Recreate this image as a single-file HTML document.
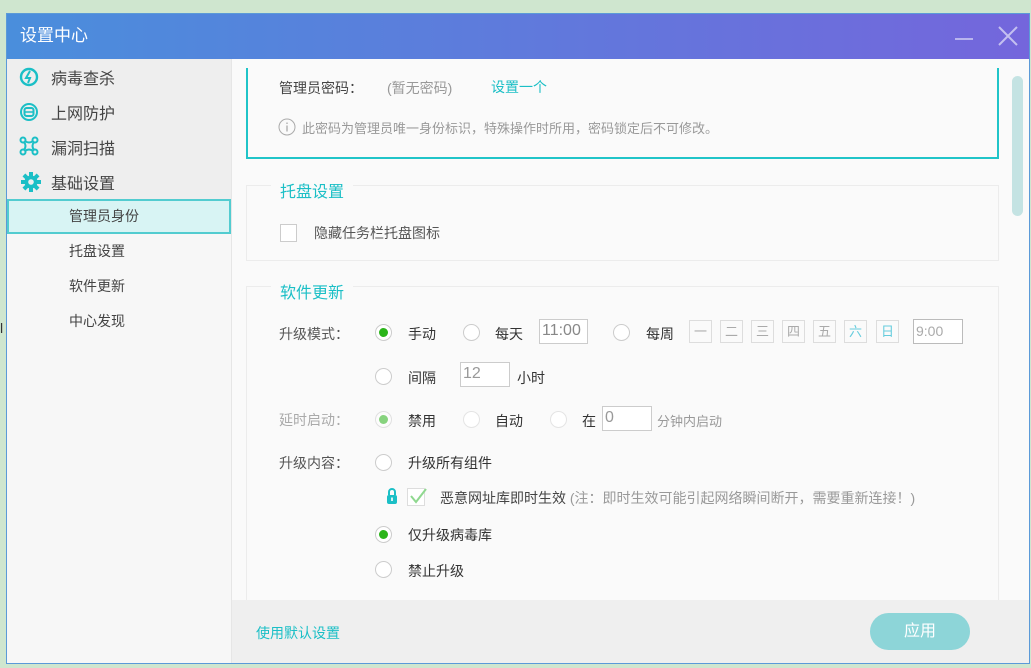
<!DOCTYPE html>
<html><head><meta charset="utf-8"><style>
*{margin:0;padding:0;box-sizing:border-box}
body{width:1031px;height:668px;overflow:hidden;background:#cfe6cf;font-family:"Liberation Sans","Noto Sans CJK SC",sans-serif;font-size:14px;color:#333;position:relative}
.abs{position:absolute}
.win{left:6px;top:13px;width:1024px;height:651px;background:#fafafa;border:1px solid #5b9ad8;overflow:hidden}
.title{left:0;top:0;width:1024px;height:45px;background:linear-gradient(90deg,#4a8edc,#7466dc);color:#fff;font-size:17px;line-height:44px;padding-left:13px}
.side{left:0;top:45px;width:224px;height:606px;background:#f7f7f7}
.side .top{height:140px;background:#eeeeee}
.mi{position:absolute;left:44px;font-size:16px;color:#444}
.si{position:absolute;left:62px;font-size:14px;color:#444}
.ico{position:absolute;left:12px}
.teal{color:#1bbfc6}
.radio{position:absolute;width:17px;height:17px;border-radius:50%;border:1px solid #ccc;background:#fff}
.radio.on::after{content:"";position:absolute;left:3px;top:3px;width:9px;height:9px;border-radius:50%;background:#2bb51a}
.box{position:absolute;border:1px solid #ccc;background:#fff;color:#999;font-size:16px;line-height:22px;padding-left:2px}
.day{position:absolute;top:306px;width:23px;height:23px;border:1px solid #ddd;color:#aaa;text-align:center;line-height:21px;font-size:13px}
.t{position:absolute;font-size:14px;white-space:nowrap}
.lbl{color:#555}
</style></head><body>
<div class="abs" style="left:0;top:320px;width:6px;height:20px;color:#333;font-size:14px">l</div>
<div class="abs win">
 <div class="abs title">设置中心
  <div class="abs" style="left:948px;top:24px;width:18px;height:2px;background:#b9b5ee"></div>
  <svg class="abs" style="left:990px;top:11px" width="22" height="22"><path d="M2 2L20 20M20 2L2 20" stroke="#c4c0f0" stroke-width="2"/></svg>
 </div>
 <div class="abs side">
  <div class="top"></div>
  <svg class="ico" style="top:8px" width="20" height="20"><circle cx="10" cy="10" r="8" fill="none" stroke="#1bbfc6" stroke-width="2.4"/><path d="M11 4L7 11h4l-2 5" fill="none" stroke="#1bbfc6" stroke-width="2"/></svg>
  <div class="mi" style="top:6px">病毒查杀</div>
  <svg class="ico" style="top:43px" width="20" height="20"><circle cx="10" cy="10" r="8" fill="none" stroke="#1bbfc6" stroke-width="2"/><rect x="5.5" y="6" width="9" height="8" rx="2" fill="none" stroke="#1bbfc6" stroke-width="2"/><path d="M6 10h8" stroke="#1bbfc6" stroke-width="1.5"/></svg>
  <div class="mi" style="top:41px">上网防护</div>
  <svg class="ico" style="top:77px" width="20" height="20"><g fill="none" stroke="#1bbfc6" stroke-width="2"><circle cx="4" cy="4" r="2.5"/><circle cx="16" cy="4" r="2.5"/><circle cx="4" cy="16" r="2.5"/><circle cx="16" cy="16" r="2.5"/><path d="M6 5Q10 8 14 5M5 6Q8 10 5 14M15 6Q12 10 15 14M6 15Q10 12 14 15"/></g></svg>
  <div class="mi" style="top:76px">漏洞扫描</div>
  <svg class="ico" style="top:113px;left:14px" width="20" height="20"><g fill="#1bbfc6"><circle cx="10" cy="10" r="6.5"/><rect x="8" y="0" width="4" height="20"/><rect x="0" y="8" width="20" height="4"/><rect x="8" y="0" width="4" height="20" transform="rotate(45 10 10)"/><rect x="8" y="0" width="4" height="20" transform="rotate(-45 10 10)"/></g><circle cx="10" cy="10" r="2.8" fill="#eee"/></svg>
  <div class="mi" style="top:111px">基础设置</div>
  <div class="abs" style="left:0;top:140px;width:224px;height:35px;background:#d8f4f4;border:2px solid #52ccd0"></div>
  <div class="si" style="top:147px">管理员身份</div>
  <div class="si" style="top:182px">托盘设置</div>
  <div class="si" style="top:217px">软件更新</div>
  <div class="si" style="top:252px">中心发现</div>
 </div>
 <div class="abs" style="left:224px;top:45px;width:1px;height:606px;background:#e6e6e6"></div>
 <div class="abs" style="left:239px;top:54px;width:753px;height:91px;border:2px solid #20c4c8;border-top:none"></div>
 <div class="t lbl" style="left:272px;top:64px;color:#444">管理员密码：</div>
 <div class="t" style="left:380px;top:64px;color:#999">(暂无密码)</div>
 <div class="t teal" style="left:484px;top:63px">设置一个</div>
 <svg class="abs" style="left:271px;top:104px" width="18" height="18"><circle cx="9" cy="9" r="8" fill="none" stroke="#aaa"/><path d="M9 7.5v6M9 4.5v1.5" stroke="#aaa" stroke-width="1.3"/></svg>
 <div class="t" style="left:295px;top:104px;color:#999;font-size:13px">此密码为管理员唯一身份标识，特殊操作时所用，密码锁定后不可修改。</div>
 <div class="abs" style="left:239px;top:171px;width:753px;height:76px;border:1px solid #ececec"></div>
 <div class="t teal" style="left:264px;top:164px;background:#fafafa;padding:0 9px;font-size:16px">托盘设置</div>
 <div class="abs" style="left:273px;top:210px;width:17px;height:18px;border:1px solid #ccc;background:#fff"></div>
 <div class="t lbl" style="left:307px;top:209px">隐藏任务栏托盘图标</div>
 <div class="abs" style="left:239px;top:272px;width:753px;height:400px;border:1px solid #ececec"></div>
 <div class="t teal" style="left:264px;top:265px;background:#fafafa;padding:0 9px;font-size:16px">软件更新</div>
 <div class="t lbl" style="left:272px;top:310px">升级模式：</div>
 <div class="radio on" style="left:368px;top:310px"></div><div class="t" style="left:401px;top:310px">手动</div>
 <div class="radio" style="left:456px;top:310px"></div><div class="t" style="left:488px;top:310px">每天</div>
 <div class="box" style="left:532px;top:305px;width:49px;height:25px;color:#888">11:00</div>
 <div class="radio" style="left:606px;top:310px"></div><div class="t" style="left:639px;top:310px">每周</div>
 <div class="day" style="left:682px">一</div><div class="day" style="left:713px">二</div><div class="day" style="left:744px">三</div><div class="day" style="left:775px">四</div><div class="day" style="left:806px">五</div><div class="day teal" style="left:837px;color:#6cd">六</div><div class="day teal" style="left:869px;color:#6cd">日</div>
 <div class="box" style="left:906px;top:305px;width:50px;height:25px;font-size:14px;color:#aaa;border-color:#bbb">9:00</div>
 <div class="radio" style="left:368px;top:354px"></div><div class="t" style="left:401px;top:354px">间隔</div>
 <div class="box" style="left:453px;top:348px;width:50px;height:25px">12</div>
 <div class="t" style="left:510px;top:354px">小时</div>
 <div class="t" style="left:272px;top:396px;color:#aaa">延时启动：</div>
 <div class="radio on" style="left:368px;top:397px;opacity:.55"></div><div class="t" style="left:401px;top:397px">禁用</div>
 <div class="radio" style="left:456px;top:397px;border-color:#e4e4e4"></div><div class="t" style="left:488px;top:397px">自动</div>
 <div class="radio" style="left:543px;top:397px;border-color:#e4e4e4"></div><div class="t" style="left:575px;top:397px">在</div>
 <div class="box" style="left:595px;top:392px;width:50px;height:25px">0</div>
 <div class="t" style="left:650px;top:397px;color:#999;font-size:13px">分钟内启动</div>
 <div class="t lbl" style="left:272px;top:439px">升级内容：</div>
 <div class="radio" style="left:368px;top:440px"></div><div class="t" style="left:401px;top:439px">升级所有组件</div>
 <svg class="abs" style="left:379px;top:473px" width="12" height="18"><path d="M3 8V5a3 3 0 0 1 6 0v3" fill="none" stroke="#1bbfc6" stroke-width="2"/><rect x="1" y="8" width="10" height="9" rx="2" fill="#1bbfc6"/><rect x="5.2" y="10.5" width="1.6" height="3.5" fill="#fff"/></svg>
 <div class="abs" style="left:400px;top:474px;width:18px;height:18px;border:1px solid #ddd;background:#fff"></div>
 <svg class="abs" style="left:401px;top:473px" width="20" height="18"><path d="M3 9l5 6L18 2" fill="none" stroke="#8fd88f" stroke-width="2"/></svg>
 <div class="t" style="left:433px;top:474px;color:#444">恶意网址库即时生效 <span style="color:#999">(注：即时生效可能引起网络瞬间断开，需要重新连接！)</span></div>
 <div class="radio on" style="left:368px;top:512px"></div><div class="t" style="left:401px;top:511px">仅升级病毒库</div>
 <div class="radio" style="left:368px;top:547px"></div><div class="t" style="left:401px;top:547px">禁止升级</div>
 <div class="abs" style="left:1005px;top:62px;width:11px;height:140px;border-radius:6px;background:#c4e3e3"></div>
 <div class="abs" style="left:225px;top:586px;width:799px;height:65px;background:#efefef"></div>
 <div class="t teal" style="left:249px;top:609px">使用默认设置</div>
 <div class="abs" style="left:863px;top:599px;width:100px;height:37px;border-radius:19px;background:#8dd5d8;color:#fff;font-size:16px;text-align:center;line-height:37px">应用</div>
</div>
</body></html>
